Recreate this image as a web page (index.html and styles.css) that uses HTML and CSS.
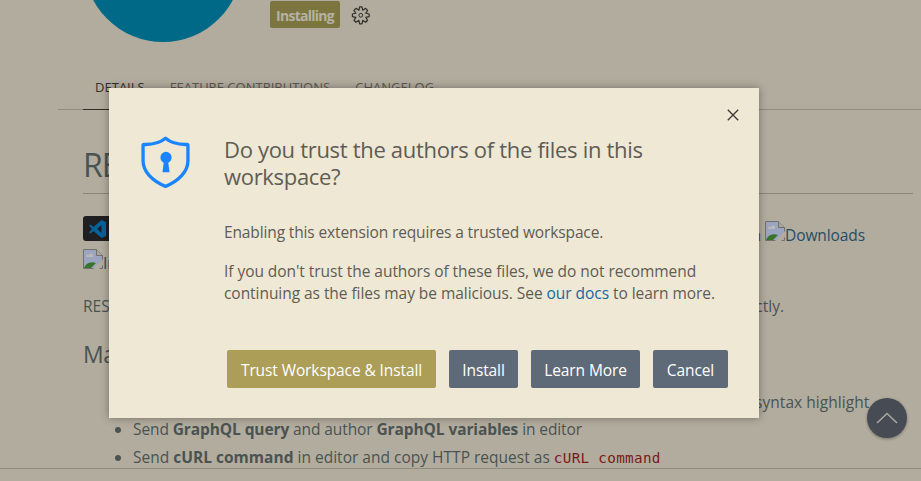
FILE: index.html
```html
<!DOCTYPE html>
<html lang="en">
<head>
<meta charset="utf-8">
<title>Workspace trust</title>
<link rel="stylesheet" href="styles.css">
</head>
<body>
<main class="page">
  <header class="header">
    <svg class="avatar" width="150" height="42" viewBox="0 0 150 42"><circle cx="75" cy="-37" r="79" fill="#006987"/></svg>
    <span class="installing"><span>Installing</span></span>
    <svg class="gear" width="20" height="20" viewBox="0 0 20 20" fill="none" stroke="#302e2b" stroke-width="1" stroke-linejoin="round"><path d="M9 1.500h2l.6 2.800 2.400-1.600 1.700 1.700L14.100 6.800l2.900.6v2.200l-2.900.6 1.600 2.400-1.700 1.700-2.400-1.600-.6 2.900H9l-.6-2.900L6 14.300l-1.700-1.700 1.600-2.400L3 9.600V7.400l2.900-.6L4.300 4.400 6 2.700l2.400 1.600z" transform="translate(-2.200 -.9) scale(1.200)"/><circle cx="9.800" cy="9.300" r="1.900"/></svg>
  </header>
  <nav class="tabs"><span class="tab active">DETAILS</span><span class="tab">FEATURE CONTRIBUTIONS</span><span class="tab">CHANGELOG</span></nav>
  <section class="readme">
    <h1>RE</h1>
    <div class="badges">
      <svg width="80" height="25" viewBox="0 0 80 25"><rect width="80" height="25" rx="3" fill="#1f1f22"/><path d="M18.500 4 23 6v14l-4.500 2-8-7-3 2.400L6 16.300 9 13 6 9.700l1.500-1.100 3 2.400zM18.500 9 14 13l4.500 4z" fill="#07629b" fill-rule="evenodd"/></svg>
      <a class="broken"><span class="prev">n</span><svg class="broken-icon" width="20" height="20" viewBox="0 0 20 20"><path d="M.5.500h13l6 6v13H.5z" fill="#9ba5c0" stroke="#73716f"/><path d="M13.500.500v6h6" fill="#aaa69f" stroke="#73716f"/><path d="M3 7a2 2 0 0 1 3-1 2 2 0 0 1 4 1v1H3z" fill="#bab9b7"/><path d="M1 19c2-5 6-7 12-5l-5 5z" fill="#39742a"/><path d="M10 20 20 10v6l-4 4z" fill="#b2ac9e"/></svg><span>Downloads</span></a>
    </div>
    <div class="badges second">
      <a class="broken"><svg class="broken-icon" width="20" height="20" viewBox="0 0 20 20"><path d="M.5.500h13l6 6v13H.5z" fill="#9ba5c0" stroke="#73716f"/><path d="M13.500.500v6h6" fill="#aaa69f" stroke="#73716f"/><path d="M3 7a2 2 0 0 1 3-1 2 2 0 0 1 4 1v1H3z" fill="#bab9b7"/><path d="M1 19c2-5 6-7 12-5l-5 5z" fill="#39742a"/><path d="M10 20 20 10v6l-4 4z" fill="#b2ac9e"/></svg><span>In</span></a>
    </div>
    <p class="intro"><span>RES</span><span>ctly.</span></p>
    <h2>Ma</h2>
    <ul>
      <li class="first">syntax highlight</li>
      <li>Send <b>GraphQL query</b> and author <b>GraphQL variables</b> in editor</li>
      <li class="curl">Send <b>cURL command</b> in editor and copy HTTP request as <code>cURL command</code></li>
    </ul>
  </section>
  <footer class="bottom"></footer>
</main>
<button class="to-top" aria-label="Scroll to top"><svg width="22" height="12" viewBox="0 0 22 12" fill="none" stroke="#aaa8a5" stroke-width="1.500"><path d="m1 11 10-9.500L21 11"/></svg></button>
<section class="dialog" role="dialog">
  <div class="close-row"><svg width="12" height="12" viewBox="0 0 12 12" stroke="#3d3734" stroke-width="1.300"><path d="m.8.800 10.400 10.400M11.200.800.800 11.200"/></svg></div>
  <div class="content">
    <svg class="shield" width="49" height="52" viewBox="0 0 50 52" preserveAspectRatio="none"><path d="M25 2.300c5.500 4.600 13 6.400 22 6.100.6 0 .9.400.9 1v15.300C47.900 35.200 39 44.700 25 50.300 11 44.700 2.100 35.200 2.100 24.700V9.400c0-.6.300-1 .9-1 9 .3 16.500-1.500 22-6.100z" fill="none" stroke="#1a85ff" stroke-width="3.400" stroke-linejoin="round"/><circle cx="25.500" cy="21.500" r="5.700" fill="#1a85ff"/><path d="M23.500 24h4l1.600 12.300h-7.200z" fill="#1a85ff"/></svg>
    <div class="message">
      <h3>Do you trust the authors of the files in this<br>workspace?</h3>
      <p class="tight">Enabling this extension requires a trusted workspace.</p>
      <p>If you don't trust the authors of these files, we do not recommend<br>continuing as the files may be malicious. See <a>our docs</a> to learn more.</p>
    </div>
  </div>
  <div class="actions">
    <button class="btn primary">Trust Workspace &amp; Install</button>
    <button class="btn install">Install</button>
    <button class="btn learn">Learn More</button>
    <button class="btn cancel">Cancel</button>
  </div>
</section>
</body>
</html>
```
FILE: styles.css
```css
* { box-sizing: border-box; }
body { margin: 0; width: 921px; height: 481px; overflow: hidden; position: relative; background: #b2ac9e; font: 15.5px/22px "Open Sans", "Noto Sans", sans-serif; color: #4a5352; }
h1, h2, h3, p, ul { margin: 0; font-weight: 400; }
button { border: 0; padding: 0; font: inherit; }
svg { display: block; flex: none; }
span { white-space: nowrap; }
.page { height: 481px; display: flex; flex-direction: column; overflow: hidden; }
.header { height: 72px; flex: none; display: flex; align-items: flex-start; padding-left: 88px; }
.installing { width: 70px; height: 27px; margin: 1px 0 0 32px; border-radius: 2px; background: #7d753f; color: #b5b1a5; font-weight: 700; font-size: 14px; line-height: 29px; text-align: center; letter-spacing: -.75px; }
.gear { margin: 6px 0 0 11px; }
.tabs { margin-left: 58px; padding-left: 25px; height: 38px; flex: none; display: flex; border-bottom: 1px solid #918b7f; font-size: 13px; line-height: 30px; letter-spacing: .02px; color: #5c5850; }
.tab { height: 38px; padding: 0 13px 0 12px; }
.tab.active { color: #33302c; border-bottom: 1px solid #302d29; }
.readme { padding-left: 83px; height: 358px; flex: none; }
h1 { height: 84px; width: 830px; border-bottom: 1px solid #8c867a; padding-top: 31px; font-size: 32px; line-height: 48px; letter-spacing: -1px; }
.badges { display: flex; justify-content: space-between; width: 782px; height: 31px; margin-top: 22px; color: #244e65; }
.broken { display: flex; line-height: 29px; letter-spacing: -.1px; }
.broken span { padding-top: 5px; }
.broken .prev { padding-right: 4px; color: #4a5352; }
.broken-icon { margin-top: 5px; }
.second { margin-top: -3px; }
.intro { display: flex; justify-content: space-between; width: 701px; margin-top: 20px; }
h2 { font-size: 23px; line-height: 32px; margin-top: 21px; letter-spacing: -.5px; }
ul { padding: 0 0 0 50px; margin-top: 18px; letter-spacing: -.1px; }
li { height: 28px; line-height: 28px; white-space: nowrap; }
li.first { list-style: none; height: 27px; padding-left: 622px; letter-spacing: .05px; }
li.curl { letter-spacing: .01px; }
b { font-weight: 700; }
code { font: 14.3px "DejaVu Sans Mono", monospace; letter-spacing: .3px; color: #7b1919; }
.bottom { border-top: 1px solid #918b80; height: 13px; flex: none; }
.to-top { position: absolute; left: 867px; top: 398px; width: 40px; height: 40px; border-radius: 50%; background: #464b54; display: grid; place-items: center; box-shadow: 0 1px 3px #0005; }
.dialog { position: absolute; left: 109px; top: 88px; width: 650px; height: 330px; background: #eee8d5; box-shadow: 0 0 8px rgba(0,0,0,.36); color: #5f5c54; padding: 21px 20px 30px 31px; display: flex; flex-direction: column; }
.close-row { display: flex; justify-content: flex-end; height: 27px; }
.content { display: flex; flex: 1; }
.shield { margin-left: 1px; }
.message { padding-left: 34px; }
h3 { font-size: 22px; line-height: 27px; margin-bottom: 31px; letter-spacing: -.31px; white-space: nowrap; }
.message p { margin-bottom: 17px; white-space: nowrap; letter-spacing: -.05px; }
.message p.tight { letter-spacing: -.13px; }
.message a { color: #1668a0; }
.actions { display: flex; justify-content: flex-end; gap: 13px; padding-right: 11px; height: 38px; }
.btn { height: 38px; border-radius: 2px; color: #fff; background: #5f6a79; line-height: 40px; white-space: nowrap; letter-spacing: -.1px; }
.primary { width: 209px; background: #ac9d57; }
.install { width: 69px; }
.learn { width: 109px; }
.cancel { width: 75px; }
```
